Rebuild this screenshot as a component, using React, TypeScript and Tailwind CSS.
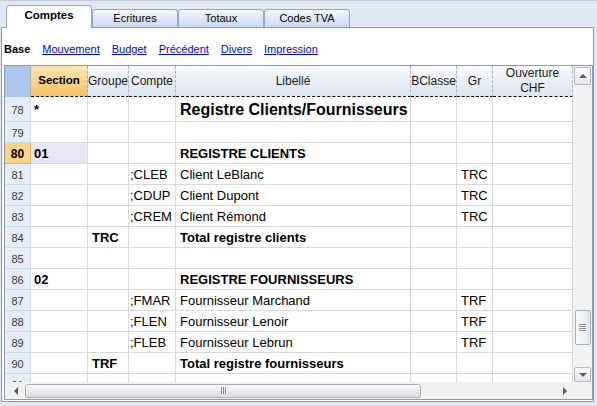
import React from "react";

type Row = {
  n: number;
  h?: "tall";
  section?: string;
  groupe?: string;
  compte?: string;
  lib?: string;
  libStyle?: "title" | "bold";
  gr?: string;
  active?: boolean;
};

const rows: Row[] = [
  { n: 78, h: "tall", section: "*", lib: "Registre Clients/Fournisseurs", libStyle: "title" },
  { n: 79 },
  { n: 80, section: "01", lib: "REGISTRE CLIENTS", libStyle: "bold", active: true },
  { n: 81, compte: ";CLEB", lib: "Client LeBlanc", gr: "TRC" },
  { n: 82, compte: ";CDUP", lib: "Client Dupont", gr: "TRC" },
  { n: 83, compte: ";CREM", lib: "Client Rémond", gr: "TRC" },
  { n: 84, groupe: "TRC", lib: "Total registre clients", libStyle: "bold" },
  { n: 85 },
  { n: 86, section: "02", lib: "REGISTRE FOURNISSEURS", libStyle: "bold" },
  { n: 87, compte: ";FMAR", lib: "Fournisseur Marchand", gr: "TRF" },
  { n: 88, compte: ";FLEN", lib: "Fournisseur Lenoir", gr: "TRF" },
  { n: 89, compte: ";FLEB", lib: "Fournisseur Lebrun", gr: "TRF" },
  { n: 90, groupe: "TRF", lib: "Total registre fournisseurs", libStyle: "bold" },
  { n: 91 },
];

const cell =
  "shrink-0 flex items-center pt-[2px] overflow-hidden whitespace-nowrap border-r border-b border-[#d9d9d9]";

function Tab({ label }: { label: string }) {
  return (
    <div className="w-[86px] h-[18px] mb-px shrink-0 flex items-center justify-center border border-b-0 border-[#91a5c6] rounded-t-[4px] bg-gradient-to-b from-[#f4f7fc] to-[#c9d9f1] text-[11px] text-black">
      {label}
    </div>
  );
}

function HeaderCell({
  w,
  children,
}: {
  w: string;
  children: React.ReactNode;
}) {
  return (
    <div
      className={`${w} shrink-0 h-full flex flex-col items-center justify-center text-center leading-[15px] text-[12px] text-[#1a1a1a] border-r border-[#a8b6ca] border-b border-b-black border-dashed bg-gradient-to-b from-[#f8fafd] to-[#dbe3ee]`}
    >
      {children}
    </div>
  );
}

function Arrow({ dir }: { dir: "up" | "down" | "left" | "right" }) {
  const pts =
    dir === "up"
      ? "0,4 4,0 8,4"
      : dir === "down"
      ? "0,0 8,0 4,4"
      : dir === "left"
      ? "4,0 4,8 0,4"
      : "0,0 0,8 4,4";
  const w = dir === "up" || dir === "down" ? 8 : 4;
  const h = dir === "up" || dir === "down" ? 4 : 8;
  return (
    <svg width={w} height={h} viewBox={`0 0 ${w} ${h}`}>
      <polygon points={pts} fill="#5a5a5a" />
    </svg>
  );
}

export default function App() {
  return (
    <div className="w-[597px] h-[406px] bg-[#dfe8f4] border-t border-[#c4cad3] font-['Liberation_Sans',Arial,sans-serif] overflow-hidden flex flex-col">
      {/* Tabs */}
      <div className="h-[27px] flex items-end pl-[6px] relative z-10 -mb-px">
        <div className="w-[86px] h-[23px] shrink-0 flex items-center justify-center border border-b-0 border-[#91a5c6] rounded-t-[4px] bg-white text-[11.5px] font-bold text-black pb-[2px]">
          Comptes
        </div>
        <Tab label="Ecritures" />
        <Tab label="Totaux" />
        <Tab label="Codes TVA" />
      </div>

      {/* Panel */}
      <div className="ml-px w-[593px] h-[375px] bg-white border border-[#8898b0] flex flex-col">
        {/* link row */}
        <div className="h-[37px] pt-[6px] pl-[2px] flex items-center gap-[12px] text-[11px]">
          <span className="font-bold text-black">Base</span>
          <span className="text-[#0000ee] underline">Mouvement</span>
          <span className="text-[#0000ee] underline">Budget</span>
          <span className="text-[#0000ee] underline">Précédent</span>
          <span className="text-[#0000ee] underline">Divers</span>
          <span className="text-[#0000ee] underline">Impression</span>
        </div>

        {/* Grid */}
        <div className="ml-[2px] w-[589px] h-[335px] border border-[#8a9ab2] flex flex-col">
          <div className="flex h-[316px]">
            {/* table */}
            <div className="w-[568px] h-full overflow-hidden flex flex-col">
              {/* header */}
              <div className="flex h-[31px] shrink-0">
                <div className="w-[26px] shrink-0 h-full bg-[#adc7ec] border-r border-[#9fb4d2]" />
                <div className="w-[57px] shrink-0 h-full flex items-center justify-center text-[11.5px] font-bold text-black border-r border-[#e2a14a] border-b border-b-black border-dashed bg-gradient-to-b from-[#fce6b0] to-[#f5c365]">
                  Section
                </div>
                <HeaderCell w="w-[41px]">Groupe</HeaderCell>
                <HeaderCell w="w-[47px]">Compte</HeaderCell>
                <HeaderCell w="w-[235px]">Libellé</HeaderCell>
                <HeaderCell w="w-[46px]">BClasse</HeaderCell>
                <HeaderCell w="w-[36px]">Gr</HeaderCell>
                <HeaderCell w="w-[80px]">
                  <span>Ouverture</span>
                  <span>CHF</span>
                </HeaderCell>
              </div>

              {/* rows */}
              {rows.map((r) => (
                <div
                  key={r.n}
                  className={`flex shrink-0 text-[13px] text-black ${
                    r.h === "tall" ? "h-[25px]" : "h-[21px]"
                  }`}
                >
                  <div
                    className={`w-[26px] shrink-0 flex items-center justify-center pt-[2px] text-[11px] border-r border-b ${
                      r.active
                        ? "bg-[#fbd48a] border-[#e6b060] font-bold text-[12px] text-black"
                        : "bg-[#e5edf8] border-[#cdd8e6] text-[#3a3a3a]"
                    }`}
                  >
                    {r.n}
                  </div>
                  <div
                    className={`${cell} w-[57px] pl-[3px] font-bold ${
                      r.active ? "bg-[#e6e6f6]" : ""
                    }`}
                  >
                    {r.section}
                  </div>
                  <div className={`${cell} w-[41px] pl-[4px] font-bold`}>
                    {r.groupe}
                  </div>
                  <div className={`${cell} w-[47px] pl-[1px]`}>{r.compte}</div>
                  <div
                    className={`${cell} w-[235px] pl-[4px] ${
                      r.libStyle === "title"
                        ? "text-[16px] font-bold"
                        : r.libStyle === "bold"
                        ? "font-bold"
                        : ""
                    }`}
                  >
                    {r.lib}
                  </div>
                  <div className={`${cell} w-[46px]`} />
                  <div className={`${cell} w-[36px] pl-[4px]`}>{r.gr}</div>
                  <div className={`${cell} w-[80px]`} />
                </div>
              ))}
            </div>

            {/* vertical scrollbar */}
            <div className="w-[19px] h-full bg-[#f2f2f2] flex flex-col items-center pt-px">
              <div className="w-[17px] h-[18px] shrink-0 flex items-center justify-center border border-[#b3b9c4] rounded-[2px] bg-gradient-to-b from-white to-[#e3e6ec]">
                <Arrow dir="up" />
              </div>
              <div className="h-[225px] shrink-0" />
              <div className="w-[16px] h-[35px] shrink-0 flex flex-col items-center justify-center gap-[1px] border border-[#a9afba] rounded-[2px] bg-gradient-to-r from-[#fbfbfb] to-[#e2e4e8]">
                <div className="w-[7px] h-px bg-[#8c8c8c]" />
                <div className="w-[7px] h-px bg-[#8c8c8c]" />
                <div className="w-[7px] h-px bg-[#8c8c8c]" />
                <div className="w-[7px] h-px bg-[#8c8c8c]" />
              </div>
              <div className="h-[22px] shrink-0" />
              <div className="w-[17px] h-[15px] shrink-0 flex items-center justify-center border border-[#b3b9c4] rounded-[2px] bg-gradient-to-b from-white to-[#e3e6ec]">
                <Arrow dir="down" />
              </div>
            </div>
          </div>

          {/* horizontal scrollbar */}
          <div className="flex h-[17px]">
            <div className="w-[568px] h-full bg-[#f0f0f0] flex items-center">
              <div className="w-[20px] shrink-0 flex items-center justify-center pl-[2px]">
                <Arrow dir="left" />
              </div>
              <div className="w-[396px] h-[14px] shrink-0 flex items-center justify-center gap-[1px] border border-[#a9adb5] rounded-[3px] bg-gradient-to-b from-[#fbfbfb] to-[#d9dbe0]">
                <div className="w-px h-[7px] bg-[#8c8c8c]" />
                <div className="w-px h-[7px] bg-[#8c8c8c]" />
                <div className="w-px h-[7px] bg-[#8c8c8c]" />
              </div>
              <div className="flex-1" />
              <div className="w-[16px] shrink-0 flex items-center justify-center">
                <Arrow dir="right" />
              </div>
            </div>
            <div className="w-[19px] h-full bg-[#f2f2f2]" />
          </div>
        </div>
      </div>
    </div>
  );
}
